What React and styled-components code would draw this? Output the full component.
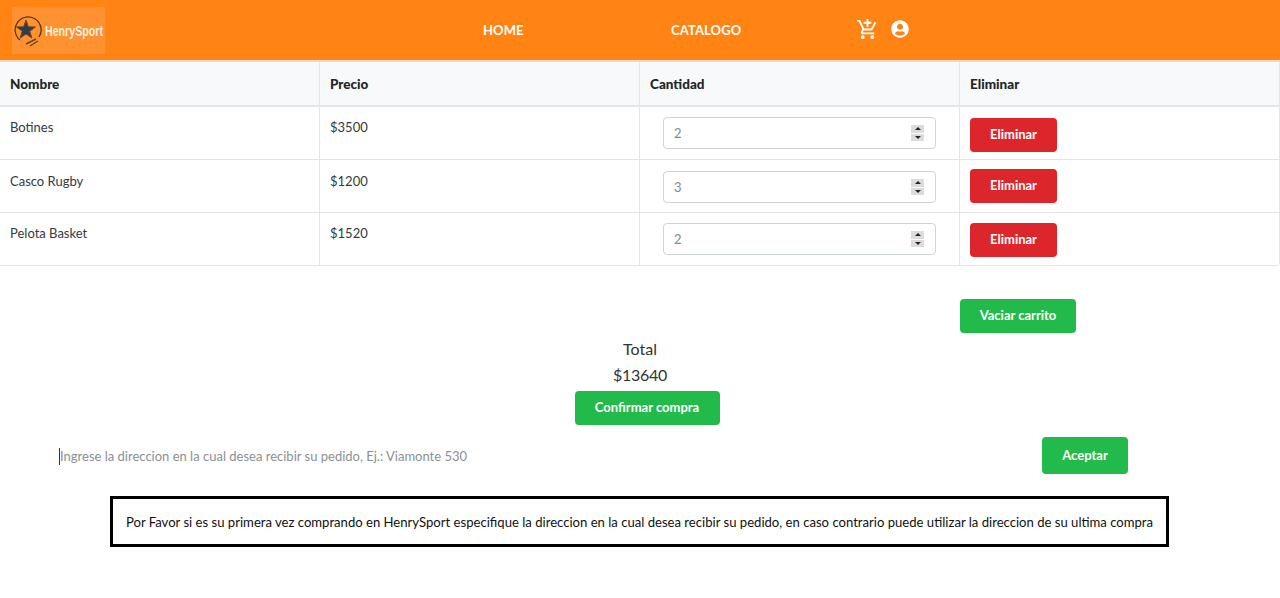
import React from 'react';
import styled, {createGlobalStyle} from 'styled-components';
import {MdAddShoppingCart} from 'react-icons/md';
import {FaUserCircle} from 'react-icons/fa';

const GlobalStyle = createGlobalStyle`
    body {
        margin: 0;
        background: #fff;
        font-family: "Lato", "Noto Sans", sans-serif;
        color: #212529;
    }
`;

const items = [
    {name: "Botines", price: 3500, qty: 2, textTop: 12, qtyTop: 10, btnTop: 11},
    {name: "Casco Rugby", price: 1200, qty: 3, textTop: 13, qtyTop: 11, btnTop: 9},
    {name: "Pelota Basket", price: 1520, qty: 2, textTop: 12, qtyTop: 10, btnTop: 10},
];

function Logo() {
    return (
        <LogoBox>
            <LogoMark width="28" height="34" viewBox="0 0 28 34">
                <path d="M6 27A13 13 0 1 1 25 24" fill="none" stroke="#5a3516" strokeWidth="1.3" />
                <path d="M12 7l2.35 6.76 7.16.15-5.71 4.33 2.08 6.85L12 21l-5.88 4.09 2.08-6.85-5.71-4.33 7.16-.15z" fill="#2f3b4f" stroke="#7a4a1c" strokeWidth="1" />
                <path d="M12 31l10-5M16 33l8-5" stroke="#6a4218" strokeWidth="1.4" />
            </LogoMark>
            <LogoText>HenrySport</LogoText>
        </LogoBox>
    );
}

function QtyInput({value}) {
    return (
        <QtyBox>
            <QtyValue defaultValue={value} />
            <Spinner>
                <SpinButton $up />
                <SpinButton />
            </Spinner>
        </QtyBox>
    );
}

export default function App() {
    return (
        <>
            <GlobalStyle />
            <Nav>
                <Logo />
                <NavLinks>
                    <NavLink $width="188px">HOME</NavLink>
                    <NavLink $width="186px">CATALOGO</NavLink>
                </NavLinks>
                <NavIcons>
                    <MdAddShoppingCart size={23} />
                    <FaUserCircle size={18} />
                </NavIcons>
            </Nav>

            <TableWrap>
                <Table>
                    <thead>
                        <tr>
                            <HeadCell>Nombre</HeadCell>
                            <HeadCell>Precio</HeadCell>
                            <HeadCell>Cantidad</HeadCell>
                            <HeadCell>Eliminar</HeadCell>
                        </tr>
                    </thead>
                    <tbody>
                        {items.map((item) => (
                            <tr key={item.name}>
                                <Cell $top={item.textTop}>{item.name}</Cell>
                                <Cell $top={item.textTop}>${item.price}</Cell>
                                <Cell $top={item.qtyTop}><QtyInput value={item.qty} /></Cell>
                                <Cell $top={item.btnTop}><DeleteButton>Eliminar</DeleteButton></Cell>
                            </tr>
                        ))}
                    </tbody>
                </Table>
            </TableWrap>

            <EmptyRow>
                <GreenButton $width="116px">Vaciar carrito</GreenButton>
            </EmptyRow>

            <Summary>
                <TotalLine>Total</TotalLine>
                <TotalLine $tight>$13640</TotalLine>
                <ConfirmButton $width="145px">Confirmar compra</ConfirmButton>
            </Summary>

            <AddressRow>
                <AddressInput placeholder="Ingrese la direccion en la cual desea recibir su pedido, Ej.: Viamonte 530" />
                <AcceptButton $width="86px">Aceptar</AcceptButton>
            </AddressRow>

            <Notice>
                Por Favor si es su primera vez comprando en HenrySport especifique la direccion en la cual desea recibir su pedido, en caso contrario puede utilizar la direccion de su ultima compra
            </Notice>
        </>
    );
}

const Nav = styled.nav`
    display: flex;
    align-items: center;
    height: 60px;
    padding-left: 12px;
    background: #ff8413;
    color: #fff;
`;

const LogoBox = styled.div`
    display: flex;
    align-items: center;
    flex: none;
    gap: 3px;
    width: 93px;
    height: 47px;
    padding-left: 2px;
    box-sizing: border-box;
    background: #fe9231;
`;

const LogoMark = styled.svg`
    flex: none;
`;

const LogoText = styled.span`
    flex: none;
    font-family: "Liberation Sans", sans-serif;
    font-size: 15px;
    font-weight: 700;
    color: #ffeedd;
    white-space: nowrap;
    transform: scaleX(0.71);
    transform-origin: left center;
`;

const NavLinks = styled.div`
    display: flex;
    margin-left: 378px;
`;

const NavLink = styled.a`
    width: ${(p) => p.$width};
    font-size: 13px;
    font-weight: 700;
    letter-spacing: 0.1px;
    color: #fff;
`;

const NavIcons = styled.div`
    display: flex;
    align-items: center;
    gap: 12px;
    margin-bottom: 2px;
    margin-left: -1px;
`;

const TableWrap = styled.div`
    border-top: 2px solid #f3d9c4;
    border-radius: 0 0 4px 0;
    overflow: hidden;
`;

const Table = styled.table`
    width: 100%;
    table-layout: fixed;
    border-collapse: separate;
    border-spacing: 0;
    font-size: 13px;
`;

const HeadCell = styled.th`
    height: 45px;
    padding: 0 10px;
    box-sizing: border-box;
    text-align: left;
    font-size: 13.5px;
    font-weight: 900;
    color: #212529;
    background: #f8f9fa;
    border-bottom: 2px solid #e2e5e9;
    border-right: 1px solid #e2e5e9;
`;

const Cell = styled.td`
    height: 53px;
    padding: ${(p) => p.$top}px 10px 0;
    box-sizing: border-box;
    vertical-align: top;
    border-bottom: 1px solid #e2e5e9;
    border-right: 1px solid #e2e5e9;
    color: #343a40;
`;

const QtyBox = styled.div`
    display: flex;
    align-items: center;
    width: 273px;
    height: 32px;
    margin-left: 13px;
    padding: 0 11px 0 10px;
    box-sizing: border-box;
    border: 1px solid #ced4da;
    border-radius: 4px;
    background: #fff;
`;

const QtyValue = styled.input`
    flex: 1;
    min-width: 0;
    border: none;
    outline: none;
    padding: 0;
    font: inherit;
    font-size: 13px;
    color: #888;
`;

const Spinner = styled.div`
    display: flex;
    flex-direction: column;
    gap: 1px;
    width: 13px;
`;

const SpinButton = styled.span`
    display: flex;
    align-items: center;
    justify-content: center;
    height: 7.5px;
    background: #dcdcdc;
    &::after {
        content: "";
        border-left: 3px solid transparent;
        border-right: 3px solid transparent;
        ${(p) => (p.$up ? 'border-bottom: 3px solid #222;' : 'border-top: 3px solid #222;')}
    }
`;

const BaseButton = styled.button`
    display: block;
    width: ${(p) => p.$width};
    height: 34px;
    padding: 0 0 2px;
    border: none;
    border-radius: 4px;
    font-family: inherit;
    font-size: 13px;
    font-weight: 700;
    color: #fff;
`;

const DeleteButton = styled(BaseButton)`
    width: 87px;
    background: #dc262c;
`;

const GreenButton = styled(BaseButton)`
    background: #22bb4b;
`;

const EmptyRow = styled.div`
    display: flex;
    margin-top: 33px;
    padding-left: 960px;
`;

const Summary = styled.div`
    display: flex;
    flex-direction: column;
    align-items: center;
    margin-top: 3px;
`;

const TotalLine = styled.div`
    height: 26px;
    font-size: 16px;
    line-height: 26px;
    color: #333;
    letter-spacing: ${(p) => (p.$tight ? '-0.3px' : '0')};
`;

const ConfirmButton = styled(GreenButton)`
    margin-left: 14px;
    margin-top: 3px;
`;

const AddressRow = styled.div`
    display: flex;
    align-items: center;
    margin-top: 12px;
    padding-left: 59px;
`;

const AddressInput = styled.input`
    width: 983px;
    height: 17px;
    margin-top: 1px;
    padding: 0;
    box-sizing: border-box;
    border: none;
    border-left: 1px solid #333;
    outline: none;
    font-family: inherit;
    font-size: 13px;
    &::placeholder {
        color: #8a8f94;
    }
`;

const AcceptButton = styled(GreenButton)`
    height: 37px;
`;

const Notice = styled.div`
    display: flex;
    align-items: center;
    justify-content: center;
    width: 1059px;
    height: 51px;
    margin: 22px 0 0 110px;
    box-sizing: border-box;
    border: 3px solid #000;
    font-size: 13.1px;
    color: #111;
    white-space: nowrap;
`;
